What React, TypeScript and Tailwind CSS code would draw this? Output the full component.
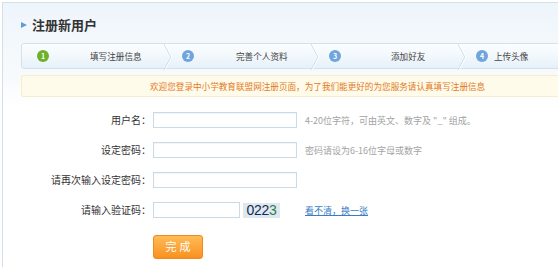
const steps = [
  { n: '1', label: '填写注册信息', color: 'bg-[#6fb02b]', circleMl: 'ml-[15px]', textMl: 'ml-[41px]' },
  { n: '2', label: '完善个人资料', color: 'bg-[#6fa4dc]', circleMl: 'ml-[13px]', textMl: 'ml-[42px]' },
  { n: '3', label: '添加好友', color: 'bg-[#6fa4dc]', circleMl: 'ml-[13px]', textMl: 'ml-[50px]' },
  { n: '4', label: '上传头像', color: 'bg-[#6fa4dc]', circleMl: 'ml-[13px]', textMl: 'ml-[6px]' },
]

function Chevron() {
  return (
    <svg width="10" height="26" viewBox="0 0 10 26" className="absolute right-[-4px] top-0">
      <polyline points="1,0 8,13 1,26" fill="none" stroke="#cadbe8" strokeWidth="1" />
      <polyline points="2,0 9,13 2,26" fill="none" stroke="#ffffff" strokeWidth="1" />
    </svg>
  )
}

function FormRow({ label, hint, children }: { label: string; hint?: React.ReactNode; children?: React.ReactNode }) {
  return (
    <div className="flex items-center h-[16px]">
      <div className="w-[148px] text-right text-[10px] leading-none text-[#333]">{label}</div>
      <div className="ml-[2px] flex items-center">
        {children ?? (
          <input className="w-[144px] h-[16px] border border-[#c9dbe8] bg-white outline-none shadow-[inset_0_1px_1px_rgba(0,0,0,0.05)]" />
        )}
      </div>
      {hint && <div className="ml-[8px] text-[9px] leading-none text-[#a3a3a3]">{hint}</div>}
    </div>
  )
}

export default function App() {
  return (
    <div className="w-[558px] h-[267px] overflow-hidden bg-white font-['Noto_Sans_CJK_SC',sans-serif] pt-[2px] pl-[2px]">
      <div className="h-full border-t border-l border-[#d3e0ea] bg-gradient-to-b from-[#eef5fb] via-[#f8fbfd] via-[30%] to-white to-[40%] pl-[18px]">
        {/* title */}
        <div className="flex items-center mt-[13px] h-[16px]">
          <svg width="6" height="6" viewBox="0 0 6 6" className="mt-[1px]">
            <polygon points="0,0 6,3 0,6" fill="#5f9dd6" />
          </svg>
          <h1 className="ml-[5px] text-[13px] font-bold leading-none text-[#333]">注册新用户</h1>
        </div>

        {/* steps */}
        <div className="mt-[11px] flex h-[26px] border border-[#d2e1ec] rounded-l-[3px] bg-gradient-to-b from-[#fcfeff] to-[#e7f1f9] w-[560px]">
          {steps.map((s, i) => (
            <div key={s.n} className="relative flex items-center w-[147px] shrink-0">
              <div className={`${s.circleMl} w-[12px] h-[12px] rounded-full ${s.color} flex items-center justify-center text-[7px] leading-none text-white font-bold`}>
                {s.n}
              </div>
              <span className={`${s.textMl} text-[8.6px] leading-none text-[#444]`}>{s.label}</span>
              {i < 3 && <Chevron />}
            </div>
          ))}
        </div>

        {/* notice */}
        <div className="mt-[6px] h-[22px] w-[560px] border border-[#f8eccb] rounded-[2px] bg-[#fffbea] flex items-center">
          <p className="ml-[128px] text-[8.6px] leading-none text-[#e27a1f]">
            欢迎您登录中小学教育联盟网注册页面，为了我们能更好的为您服务请认真填写注册信息
          </p>
        </div>

        {/* form */}
        <div className="mt-[15px] -ml-[18px] flex flex-col gap-[14px]">
          <FormRow label="用户名：" hint={'4-20位字符，可由英文、数字及 "_" 组成。'} />
          <FormRow label="设定密码：" hint="密码请设为6-16位字母或数字" />
          <FormRow label="请再次输入设定密码：" />
          <FormRow
            label="请输入验证码："
            hint={<a className="text-[#3a7dc4] underline cursor-pointer">看不清，换一张</a>}
          >
            <input className="w-[87px] h-[16px] border border-[#c9dbe8] bg-white outline-none" />
            <div className="ml-[3px] w-[37px] h-[15px] bg-[#dfe8ee] flex items-center justify-center font-['Liberation_Sans',sans-serif] text-[14px] leading-none tracking-[-0.3px]">
              <span className="text-[#142a55]">022</span>
              <span className="text-[#2f7d4c]">3</span>
            </div>
            <div className="w-[17px]" />
          </FormRow>
        </div>

        <div className="mt-[14px] ml-[132px]">
          <button className="w-[50px] h-[24px] rounded-[3px] border border-[#ee8a1e] bg-gradient-to-b from-[#ffbb55] to-[#f8911c] text-white text-[11px] leading-none tracking-[3px] pl-[3px]">
            完成
          </button>
        </div>
      </div>
    </div>
  )
}
